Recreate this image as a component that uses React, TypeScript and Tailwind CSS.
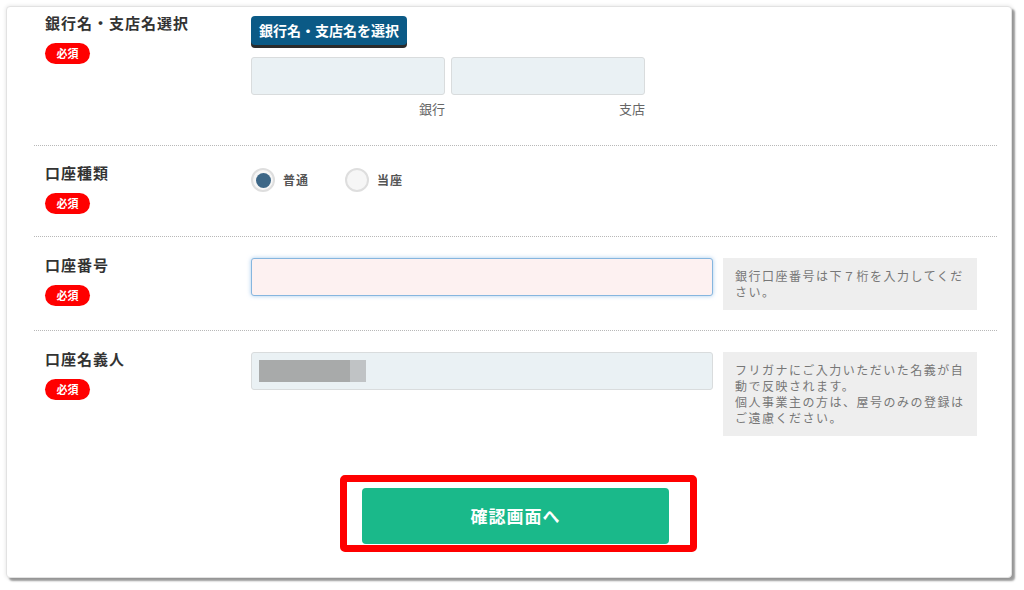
import { useState } from 'react';

const font = { fontFamily: '"Noto Sans CJK JP", "Noto Sans", sans-serif' };

function Required() {
  return (
    <span className="mt-[9px] flex h-[21px] w-[45px] items-center justify-center rounded-full bg-[#ff0000] text-[11px] font-bold text-white">
      必須
    </span>
  );
}

function Label({ text }: { text: string }) {
  return (
    <div className="w-[217px] shrink-0 pl-[11px]">
      <div className="text-[15px] font-bold leading-[22px] tracking-[1px] text-[#333]">{text}</div>
      <Required />
    </div>
  );
}

function Note({ children }: { children: React.ReactNode }) {
  return (
    <div className="ml-[10px] w-[254px] bg-[#eeeeee] py-[10px] pl-[12px] pr-[10px] text-[12px] leading-[16px] tracking-[1.5px] text-[#777]">
      {children}
    </div>
  );
}

function Radio({ label, checked, onClick }: { label: string; checked: boolean; onClick: () => void }) {
  return (
    <button type="button" onClick={onClick} className="flex items-center gap-[8px]">
      <span className="flex h-[24px] w-[24px] items-center justify-center rounded-full border-2 border-[#dedede] bg-[#f6f6f6]">
        {checked && <span className="h-[15px] w-[15px] rounded-full bg-[#3d6787]" />}
      </span>
      <span className="text-[12px] font-bold tracking-[1px] text-[#555]">{label}</span>
    </button>
  );
}

export default function App() {
  const [kind, setKind] = useState('futsu');

  return (
    <div className="min-h-screen bg-white pl-[6px] pt-[6px]" style={font}>
      <div className="h-[572px] w-[1006px] rounded-[4px] border border-[#e2e2e2] bg-white shadow-[0_0_4px_rgba(0,0,0,0.12),3px_3px_2px_rgba(0,0,0,0.38)]">
        <div className="ml-[27px] w-[963px]">
          {/* 銀行名・支店名 */}
          <div className="flex pb-[28px] pt-[5px]">
            <Label text="銀行名・支店名選択" />
            <div className="pt-[4px]">
              <button
                type="button"
                className="h-[29px] rounded-[4px] bg-[#0b5a86] px-[8px] text-[14px] font-bold text-white shadow-[0_3px_0_#2b2b2b]"
              >
                銀行名・支店名を選択
              </button>
              <div className="mt-[12px] flex gap-[6px]">
                <div className="w-[194px]">
                  <div className="h-[38px] rounded-[3px] border border-[#d9dcdd] bg-[#eaf1f4]" />
                  <div className="mt-[6px] text-right text-[13px] leading-[16px] text-[#666]">銀行</div>
                </div>
                <div className="w-[194px]">
                  <div className="h-[38px] rounded-[3px] border border-[#d9dcdd] bg-[#eaf1f4]" />
                  <div className="mt-[6px] text-right text-[13px] leading-[16px] text-[#666]">支店</div>
                </div>
              </div>
            </div>
          </div>

          {/* 口座種類 */}
          <div className="flex border-t border-dotted border-[#b8b8b8] pb-[22px] pt-[16px]">
            <Label text="口座種類" />
            <div className="mt-[6px] flex items-start gap-[36px]">
              <Radio label="普通" checked={kind === 'futsu'} onClick={() => setKind('futsu')} />
              <Radio label="当座" checked={kind === 'toza'} onClick={() => setKind('toza')} />
            </div>
          </div>

          {/* 口座番号 */}
          <div className="flex border-t border-dotted border-[#b8b8b8] pb-[20px] pt-[17px]">
            <Label text="口座番号" />
            <div className="mt-[4px] flex items-start">
              <input
                className="h-[38px] w-[462px] rounded-[3px] border border-[#86b6df] bg-[#fdf1f1] px-[8px] shadow-[0_0_4px_rgba(110,170,225,0.6)] outline-none"
              />
              <Note>銀行口座番号は下７桁を入力してください。</Note>
            </div>
          </div>

          {/* 口座名義人 */}
          <div className="flex border-t border-dotted border-[#b8b8b8] pt-[17px]">
            <Label text="口座名義人" />
            <div className="mt-[4px] flex items-start">
              <div className="flex h-[38px] w-[462px] items-center rounded-[3px] border border-[#d9dcdd] bg-[#eaf1f4] px-[7px]">
                <div className="h-[22px] w-[91px] bg-[#a8aaaa]" />
                <div className="h-[22px] w-[16px] bg-[#c0c3c5]" />
              </div>
              <Note>
                フリガナにご入力いただいた名義が自動で反映されます。
                <br />
                個人事業主の方は、屋号のみの登録はご遠慮ください。
              </Note>
            </div>
          </div>

          {/* 確認画面へ */}
          <div className="mt-[52px] flex justify-center">
            <div className="relative">
              <button
                type="button"
                className="h-[56px] w-[307px] rounded-[4px] bg-[#1ab98a] text-[17px] font-bold tracking-[1px] text-white"
              >
                確認画面へ
              </button>
              <div className="pointer-events-none absolute left-[-22px] top-[-13px] h-[77px] w-[357px] rounded-[5px] border-[7px] border-[#ff0000]" />
            </div>
          </div>
        </div>
      </div>
    </div>
  );
}
